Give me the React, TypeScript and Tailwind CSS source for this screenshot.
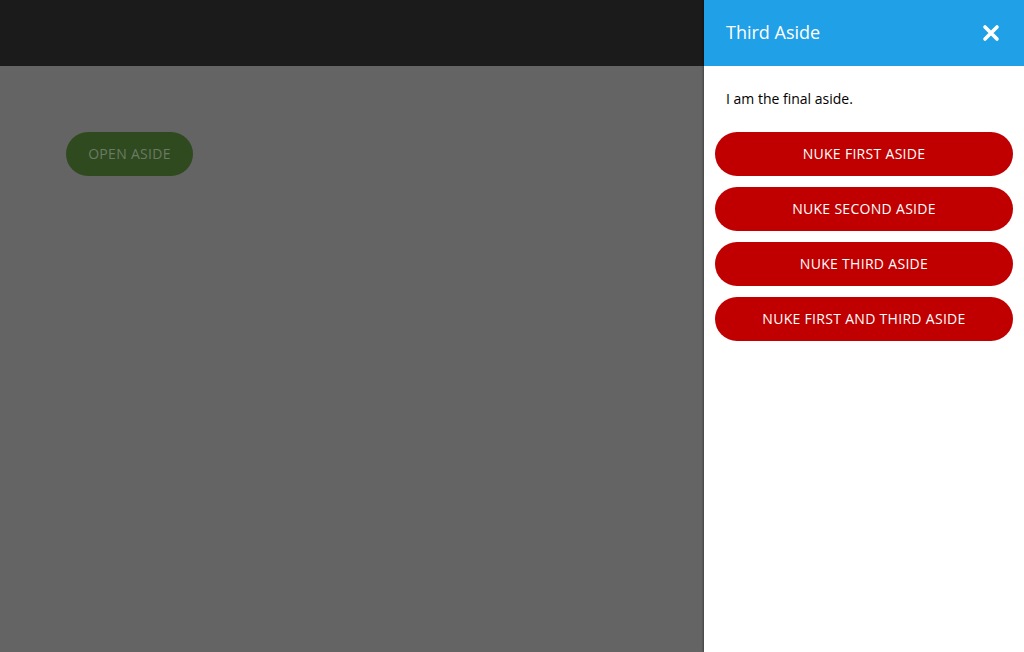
import React from 'react'

const nukeButtons = [
    'Nuke first aside',
    'Nuke second aside',
    'Nuke third aside',
    'Nuke first and third aside',
]

const App: React.FC = () => {
    return (
        <div className="flex h-[652px] w-[1024px] overflow-hidden font-['Open_Sans',sans-serif]">
            <div className="flex flex-1 flex-col bg-[#646464]">
                <header className="h-[66px] shrink-0 bg-[#1b1b1b]" />
                <main className="px-[66px] pt-[66px]">
                    <button className="h-[44px] w-[127px] rounded-full bg-[#2f4a1f] pb-[2px] text-[14px] uppercase tracking-[0.3px] text-[#6b7a64]">
                        Open aside
                    </button>
                </main>
            </div>
            <aside className="flex w-[320px] shrink-0 flex-col bg-white shadow-[-1px_0_2px_rgba(0,0,0,0.35)]">
                <div className="flex h-[66px] items-center justify-between bg-[#20a0e6] pb-[2px] pl-[22px] pr-[24px]">
                    <h2 className="text-[18px] text-white">Third Aside</h2>
                    <button aria-label="Close" className="mt-[1px] text-white">
                        <svg width="18" height="18" viewBox="0 0 18 18">
                            <path d="M3 3 L15 15 M15 3 L3 15" stroke="currentColor" strokeWidth="3.6" strokeLinecap="round" />
                        </svg>
                    </button>
                </div>
                <p className="px-[22px] pt-[22px] text-[14px] text-black">I am the final aside.</p>
                <div className="flex flex-col gap-[11px] px-[11px] pt-[23px]">
                    {
                        nukeButtons.map((label, index) => (
                            <button key={index} className="h-[44px] w-full rounded-full bg-[#c00000] pb-[2px] text-[14px] uppercase tracking-[0.3px] text-white">
                                {label}
                            </button>
                        ))
                    }
                </div>
            </aside>
        </div>
    )
}

export default App
